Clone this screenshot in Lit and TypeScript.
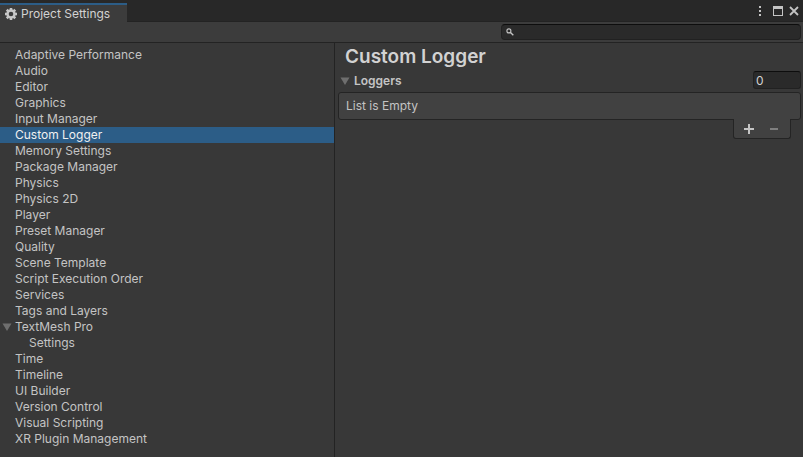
import { LitElement, html, css, svg, nothing } from "lit";
import { customElement, property, state } from "lit/decorators.js";
import { classMap } from "lit/directives/class-map.js";

interface Category {
  name: string;
  children?: string[];
}

const CATEGORIES: Category[] = [
  { name: "Adaptive Performance" },
  { name: "Audio" },
  { name: "Editor" },
  { name: "Graphics" },
  { name: "Input Manager" },
  { name: "Custom Logger" },
  { name: "Memory Settings" },
  { name: "Package Manager" },
  { name: "Physics" },
  { name: "Physics 2D" },
  { name: "Player" },
  { name: "Preset Manager" },
  { name: "Quality" },
  { name: "Scene Template" },
  { name: "Script Execution Order" },
  { name: "Services" },
  { name: "Tags and Layers" },
  { name: "TextMesh Pro", children: ["Settings"] },
  { name: "Time" },
  { name: "Timeline" },
  { name: "UI Builder" },
  { name: "Version Control" },
  { name: "Visual Scripting" },
  { name: "XR Plugin Management" },
];

const arrow = html`<svg width="10" height="8" viewBox="0 0 10 8" aria-hidden="true">
  <path d="M0.5 0.5H9.5L5 8Z" fill="#6e6e6e" />
</svg>`;

const resetButton = css`
  button {
    font: inherit;
    color: inherit;
    background: none;
    border: 0;
    padding: 0;
    margin: 0;
    text-align: left;
  }
  svg {
    display: block;
    flex: none;
  }
`;

@customElement("window-header")
export class WindowHeader extends LitElement {
  static styles = [
    resetButton,
    css`
      :host {
        display: block;
        background: #282828;
      }
      .tabs {
        display: flex;
        align-items: stretch;
        justify-content: space-between;
        height: 19px;
        padding-top: 3px;
      }
      .tab {
        display: flex;
        align-items: center;
        gap: 4px;
        padding: 0 17px 0 5px;
        border-top: 2px solid #2c5d87;
        background: #3c3c3c;
        color: #d2d2d2;
        line-height: 16px;
      }
      .controls {
        display: flex;
        flex: 1;
        align-items: center;
        justify-content: flex-end;
        gap: 4px;
        padding: 0 3px 2px 0;
        border-bottom: 1px solid #232323;
      }
      .controls button {
        display: flex;
      }
      .toolbar {
        display: flex;
        justify-content: flex-end;
        height: 20px;
        box-sizing: border-box;
        padding: 2px 2px 0 0;
        background: #3c3c3c;
      }
      .search {
        display: flex;
        align-items: center;
        gap: 4px;
        width: 300px;
        height: 16px;
        box-sizing: border-box;
        padding: 0 4px;
        border: 1px solid #212121;
        border-top-color: #0d0d0d;
        border-radius: 4px;
        background: #2a2a2a;
      }
      .search input {
        flex: 1;
        min-width: 0;
        padding: 0;
        border: 0;
        outline: 0;
        background: none;
        color: #d2d2d2;
        font: inherit;
      }
    `,
  ];

  render() {
    return html`
      <div class="tabs">
        <button class="tab">
          <svg width="12" height="12" viewBox="0 0 12 12" aria-hidden="true">
            <circle cx="6" cy="6" r="3.5" fill="none" stroke="#c8c8c8" stroke-width="2.4" />
            ${[0, 45, 90, 135, 180, 225, 270, 315].map(
              (a) => svg`<rect x="4.7" y="0" width="2.6" height="2.4" fill="#c8c8c8" transform="rotate(${a} 6 6)" />`
            )}
          </svg>
          Project Settings
        </button>
        <div class="controls">
          <button aria-label="Menu">
            <svg width="10" height="12" viewBox="0 0 10 12" fill="#c4c4c4">
              <path d="M1 1h2v2H1zM1 5h2v2H1zM1 9h2v2H1z" />
            </svg>
          </button>
          <button aria-label="Maximize">
            <svg width="12" height="12" viewBox="0 0 12 12">
              <path d="M1 1h10v10H1zM2 4v6h8V4z" fill="#c4c4c4" fill-rule="evenodd" />
            </svg>
          </button>
          <button aria-label="Close">
            <svg width="12" height="12" viewBox="0 0 12 12">
              <path d="M2 2L10 10M10 2L2 10" stroke="#c4c4c4" stroke-width="1.8" />
            </svg>
          </button>
        </div>
      </div>
      <div class="toolbar">
        <label class="search">
          <svg width="8" height="8" viewBox="0 0 8 8" fill="none" stroke="#c4c4c4">
            <circle cx="2.9" cy="2.9" r="2" stroke-width="1.1" />
            <path d="M4.5 4.5L7.3 7.3" stroke-width="1.4" />
          </svg>
          <input type="text" aria-label="Search settings" />
        </label>
      </div>
    `;
  }
}

@customElement("category-tree")
export class CategoryTree extends LitElement {
  @property() selected = "";

  static styles = [
    resetButton,
    css`
      :host {
        display: block;
        padding: 4px 0 10px;
      }
      ul {
        list-style: none;
        margin: 0;
        padding: 0;
      }
      .row {
        display: flex;
        align-items: center;
        gap: 3px;
        width: 100%;
        height: 16px;
        padding-left: 15px;
        line-height: 16px;
        white-space: nowrap;
      }
      .row.parent {
        padding-left: 2px;
      }
      .row.child {
        padding-left: 29px;
      }
      .row.selected {
        background: #2c5d87;
        color: #f0f0f0;
      }
    `,
  ];

  private select(name: string) {
    this.dispatchEvent(new CustomEvent("select-category", { detail: name }));
  }

  private row(name: string, kind: string) {
    const classes = { row: true, parent: kind === "parent", child: kind === "child", selected: name === this.selected };
    return html`<button class=${classMap(classes)} @click=${() => this.select(name)}>
      ${kind === "parent" ? arrow : nothing}${name}
    </button>`;
  }

  render() {
    return html`<ul>
      ${CATEGORIES.map(
        (c) => html`<li>
          ${this.row(c.name, c.children ? "parent" : "leaf")}
          ${c.children ? html`<ul>${c.children.map((n) => html`<li>${this.row(n, "child")}</li>`)}</ul>` : nothing}
        </li>`
      )}
    </ul>`;
  }
}

@customElement("logger-panel")
export class LoggerPanel extends LitElement {
  @property() heading = "";

  static styles = [
    resetButton,
    css`
      :host {
        display: block;
        padding: 2px 2px 0 3px;
      }
      h1 {
        margin: 0;
        padding-left: 7px;
        font-size: 19px;
        line-height: 24px;
        font-weight: 600;
        color: #d2d2d2;
      }
      .foldout {
        display: flex;
        align-items: center;
        justify-content: space-between;
        height: 18px;
        margin: 2px 0 3px;
        padding-left: 2px;
      }
      .toggle {
        display: flex;
        align-items: center;
        gap: 4px;
        padding-top: 2px;
        font-weight: 600;
        line-height: 18px;
      }
      .size {
        width: 48px;
        height: 18px;
        box-sizing: border-box;
        padding: 1px 2px 0;
        border: 1px solid #212121;
        border-top-color: #0d0d0d;
        border-radius: 3px;
        outline: 0;
        background: #2a2a2a;
        color: #d2d2d2;
        font: inherit;
      }
      .list {
        padding: 5px 7px;
        border: 1px solid #242424;
        border-radius: 3px;
        background: #414141;
        line-height: 16px;
      }
      /* The footer overlaps the list's bottom border so both read as one shape. */
      .footer {
        display: flex;
        gap: 1px;
        width: 56px;
        height: 19px;
        box-sizing: content-box;
        margin: -1px 10px 0 auto;
        border: 1px solid #242424;
        border-top: 0;
        border-radius: 0 0 3px 3px;
        background: #414141;
        position: relative;
      }
      .footer button {
        width: 24px;
        display: flex;
        align-items: center;
        justify-content: center;
      }
      .footer button:first-child {
        margin-left: 3px;
      }
    `,
  ];

  render() {
    return html`
      <h1>${this.heading}</h1>
      <div class="foldout">
        <button class="toggle" aria-expanded="true">${arrow}Loggers</button>
        <input class="size" type="text" aria-label="Number of loggers" .value=${"0"} />
      </div>
      <div class="list">List is Empty</div>
      <div class="footer">
        <button aria-label="Add logger">
          <svg width="10" height="10" viewBox="0 0 10 10"><path d="M4 0h2v4h4v2H6v4H4V6H0V4h4z" fill="#c4c4c4" /></svg>
        </button>
        <button aria-label="Remove logger">
          <svg width="10" height="10" viewBox="0 0 10 10"><path d="M1 4h8v2H1z" fill="#7f7f7f" /></svg>
        </button>
      </div>
    `;
  }
}

@customElement("app-root")
export class AppRoot extends LitElement {
  @state() private selected = "Custom Logger";

  static styles = css`
    :host {
      display: flex;
      flex-direction: column;
      min-height: 100vh;
      background: #383838;
      color: #c4c4c4;
      font: 12px/16px Inter, "Liberation Sans", sans-serif;
    }
    .body {
      display: grid;
      grid-template-columns: minmax(160px, 334px) minmax(0, 1fr);
      flex: 1;
      border-top: 1px solid #232323;
    }
    main {
      border-left: 1px solid #232323;
    }
  `;

  render() {
    return html`
      <window-header></window-header>
      <div class="body">
        <nav aria-label="Settings categories">
          <category-tree
            .selected=${this.selected}
            @select-category=${(e: CustomEvent<string>) => (this.selected = e.detail)}
          ></category-tree>
        </nav>
        <main><logger-panel .heading=${this.selected}></logger-panel></main>
      </div>
    `;
  }
}
